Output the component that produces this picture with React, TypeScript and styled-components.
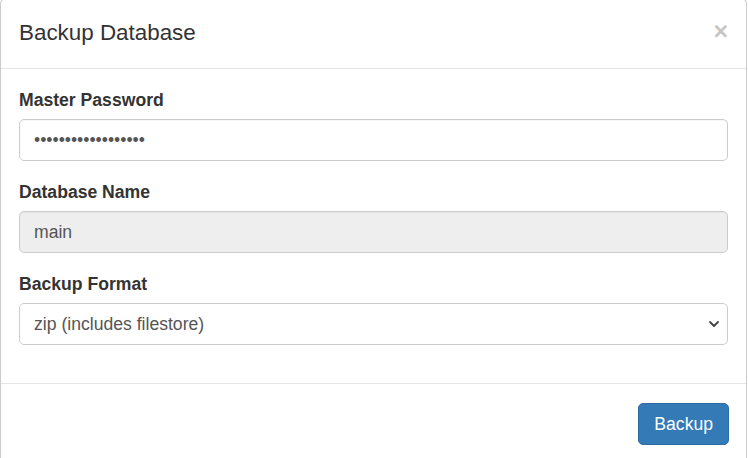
import React from "react";
import styled, { createGlobalStyle } from "styled-components";

const GlobalStyle = createGlobalStyle`
  html, body {
    margin: 0;
    padding: 0;
    background: #ffffff;
    overflow: hidden;
  }
  body {
    font-family: "Liberation Sans", Arial, Helvetica, sans-serif;
    color: #333333;
  }
  * { box-sizing: border-box; }
`;

const Modal = styled.div`
  width: 747px;
  margin-top: -2px;
  background: #ffffff;
  border: 1px solid rgba(0, 0, 0, 0.2);
  border-radius: 6px;
  display: flex;
  flex-direction: column;
`;

const Header = styled.div`
  display: flex;
  justify-content: space-between;
  align-items: flex-start;
  padding: 17px 18px 19px 18px;
  border-bottom: 1px solid #e5e5e5;
`;

const Title = styled.h4`
  margin: 0;
  font-size: 22.4px;
  line-height: 33px;
  font-weight: 400;
  color: #333333;
`;

const Close = styled.button`
  border: 0;
  background: transparent;
  padding: 0;
  margin-top: 3px;
  font-family: "Liberation Sans", Arial, sans-serif;
  font-size: 25px;
  font-weight: 700;
  line-height: 1;
  color: #000000;
  opacity: 0.22;
  cursor: pointer;
`;

const Body = styled.div`
  padding: 18px 18px 38px 18px;
  display: flex;
  flex-direction: column;
  gap: 18px;
`;

const Group = styled.div`
  display: flex;
  flex-direction: column;
  gap: 6px;
`;

const Label = styled.label`
  font-size: 17.6px;
  line-height: 26px;
  font-weight: 700;
  color: #333333;
`;

const fieldCss = `
  width: 100%;
  height: 42px;
  padding: 0 14px;
  font-family: "Liberation Sans", Arial, sans-serif;
  font-size: 17.6px;
  color: #555555;
  border: 1px solid #cccccc;
  border-radius: 5px;
  outline: none;
`;

const Input = styled.input<{ $disabled?: boolean }>`
  ${fieldCss}
  background: ${(p) => (p.$disabled ? "#eeeeee" : "#ffffff")};
  box-shadow: inset 0 1px 1px rgba(0, 0, 0, 0.04);
`;

const SelectWrap = styled.div`
  position: relative;
`;

const Select = styled.select`
  ${fieldCss}
  appearance: none;
  -webkit-appearance: none;
  background: #ffffff;
`;

const Chevron = styled.svg`
  position: absolute;
  right: 8px;
  top: 17px;
  pointer-events: none;
`;

const Footer = styled.div`
  display: flex;
  justify-content: flex-end;
  padding: 19px 17px 20px 18px;
  border-top: 1px solid #e5e5e5;
`;

const PrimaryButton = styled.button`
  height: 42px;
  padding: 0 15px;
  font-family: "Liberation Sans", Arial, sans-serif;
  font-size: 17.6px;
  color: #ffffff;
  background: #337ab7;
  border: 1px solid #2e6da4;
  border-radius: 5px;
  cursor: pointer;
`;

export default function App() {
  return (
    <>
      <GlobalStyle />
      <Modal>
        <Header>
          <Title>Backup Database</Title>
          <Close aria-label="Close">×</Close>
        </Header>
        <Body>
          <Group>
            <Label>Master Password</Label>
            <Input type="password" defaultValue="adminadminadmin123" readOnly />
          </Group>
          <Group>
            <Label>Database Name</Label>
            <Input type="text" defaultValue="main" readOnly $disabled />
          </Group>
          <Group>
            <Label>Backup Format</Label>
            <SelectWrap>
              <Select defaultValue="zip">
                <option value="zip">zip (includes filestore)</option>
                <option value="dump">pg_dump custom format (without filestore)</option>
              </Select>
              <Chevron width="12" height="8" viewBox="0 0 12 8">
                <path d="M2 2 L6 6 L10 2" fill="none" stroke="#444" strokeWidth="1.8" strokeLinecap="round" strokeLinejoin="round" />
              </Chevron>
            </SelectWrap>
          </Group>
        </Body>
        <Footer>
          <PrimaryButton>Backup</PrimaryButton>
        </Footer>
      </Modal>
    </>
  );
}
